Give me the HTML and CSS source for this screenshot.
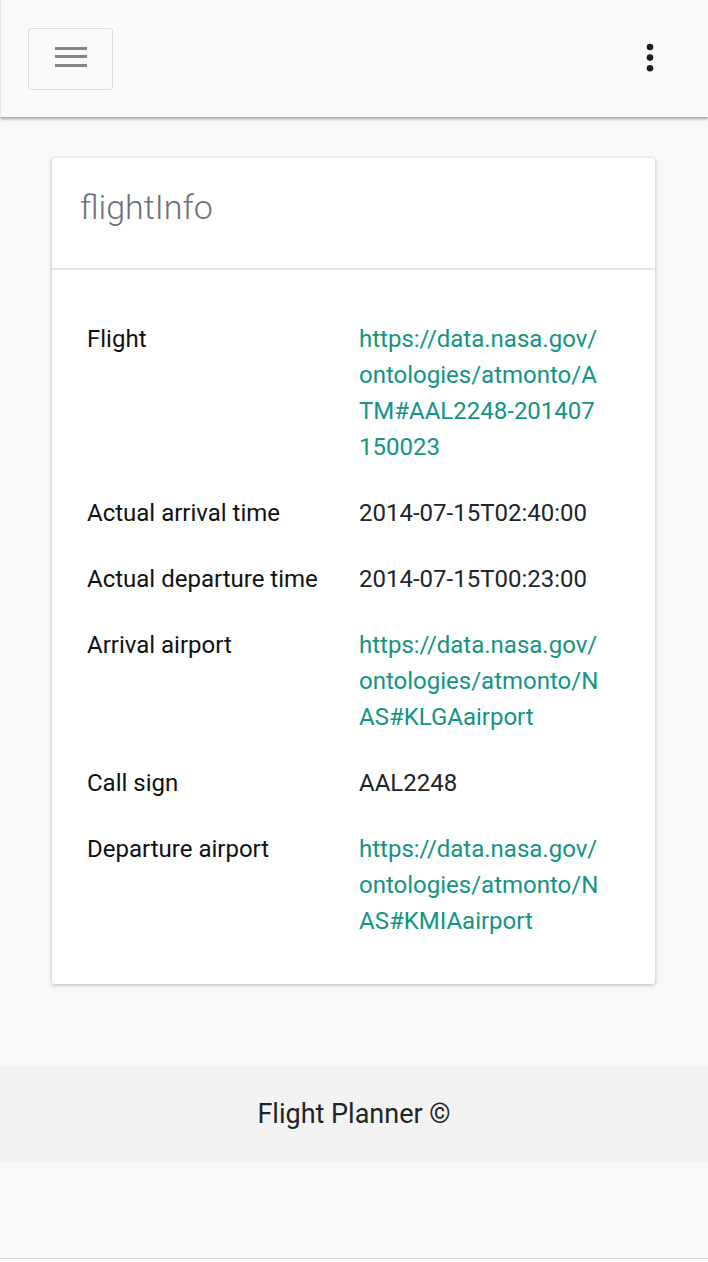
FILE: index.html
```html
<!DOCTYPE html>
<html lang="en">
<head>
<meta charset="utf-8">
<title>Flight Planner</title>
<link rel="stylesheet" href="styles.css">
</head>
<body>
<header class="navbar">
  <button class="toggler" aria-label="Menu">
    <span class="bar"></span><span class="bar"></span><span class="bar"></span>
  </button>
  <button class="kebab" aria-label="More">
    <svg width="10" height="30" viewBox="0 0 10 30"><circle cx="5" cy="4" r="3.3"/><circle cx="5" cy="14.6" r="3.3"/><circle cx="5" cy="25.2" r="3.3"/></svg>
  </button>
</header>
<main class="content">
  <section class="card">
    <div class="card-header"><h1 class="card-title">flightInfo</h1></div>
    <div class="card-body">
      <dl class="props">
        <dt>Flight</dt>
        <dd><a href="#">https://data.nasa.gov/ontologies/atmonto/ATM#AAL2248-201407150023</a></dd>
        <dt>Actual arrival time</dt>
        <dd>2014-07-15T02:40:00</dd>
        <dt>Actual departure time</dt>
        <dd>2014-07-15T00:23:00</dd>
        <dt>Arrival airport</dt>
        <dd><a href="#">https://data.nasa.gov/ontologies/atmonto/NAS#KLGAairport</a></dd>
        <dt>Call sign</dt>
        <dd>AAL2248</dd>
        <dt>Departure airport</dt>
        <dd><a href="#">https://data.nasa.gov/ontologies/atmonto/NAS#KMIAairport</a></dd>
      </dl>
    </div>
  </section>
</main>
<footer class="footer">Flight Planner ©</footer>
<div class="after-footer"></div>
</body>
</html>
```

FILE: styles.css
```css
html, body {
  margin: 0;
  padding: 0;
}
body {
  background: #f9f9f9;
  font-family: Roboto, "Liberation Sans", sans-serif;
  color: #111;
}
.navbar {
  height: 117px;
  box-sizing: border-box;
  background: #fafafa;
  border-left: 1px solid #e6e6e6;
  box-shadow: 0 2px 3px rgba(0,0,0,0.35);
  padding: 28px 53px 0 27px;
  display: flex;
  justify-content: space-between;
  align-items: flex-start;
  position: relative;
}
.toggler {
  width: 85px;
  height: 62px;
  box-sizing: border-box;
  background: transparent;
  border: 1.5px solid #dedede;
  border-radius: 3px;
  display: flex;
  flex-direction: column;
  align-items: center;
  justify-content: flex-start;
  gap: 5.5px;
  padding: 17.5px 0 0 0;
}
.toggler .bar {
  display: block;
  width: 32px;
  height: 3px;
  background: #858585;
}
.kebab {
  background: transparent;
  border: 0;
  padding: 0;
  margin-top: 15px;
  width: 10px;
  height: 30px;
  display: flex;
}
.kebab svg { fill: #1e1e1e; }
.content {
  padding: 41px 53px 82px 52px;
}
.card {
  background: #fff;
  border-radius: 3px;
  box-shadow: 0 1px 4px rgba(0,0,0,0.28);
}
.card-header {
  height: 112px;
  box-sizing: border-box;
  border-bottom: 2px solid #e4e4e4;
  padding: 27px 28px 0;
}
.card-title {
  margin: 0;
  font-weight: 300;
  font-size: 34px;
  line-height: 44px;
  color: #6a7178;
}
.card-body {
  padding: 51px 0 45px 35px;
}
.props {
  margin: 0;
  display: grid;
  grid-template-columns: 272px 240px;
  row-gap: 30px;
  font-size: 24px;
  line-height: 36px;
}
.props dt {
  margin: 0;
  color: #111;
}
.props dd {
  margin: 0;
  word-break: break-all;
  color: #212529;
}
.props a {
  color: #139484;
  text-decoration: none;
}
.footer {
  height: 96px;
  background: #f3f3f3;
  display: flex;
  align-items: center;
  justify-content: center;
  font-size: 27px;
  color: #212529;
}
.after-footer {
  height: 96px;
  border-bottom: 1px solid #d6d6d6;
}
```
